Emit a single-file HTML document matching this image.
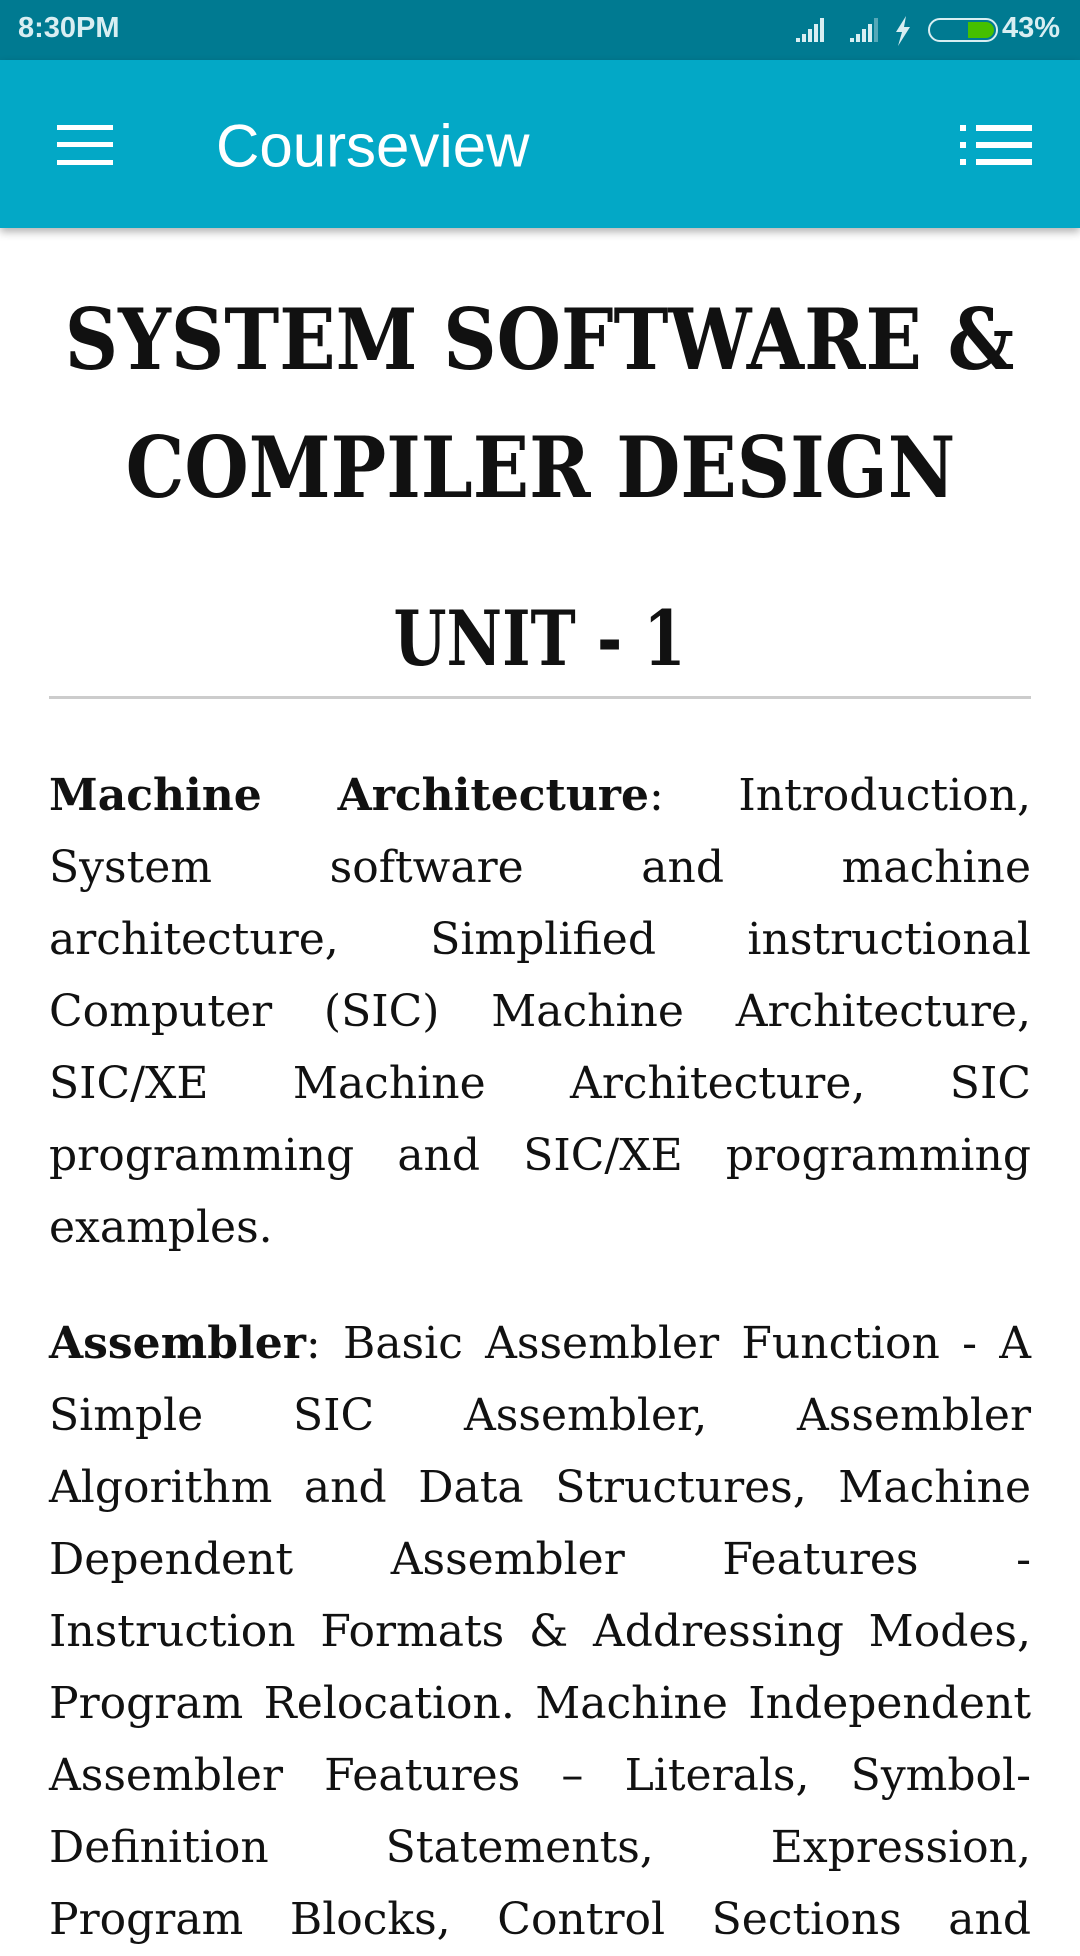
<!DOCTYPE html>
<html><head><meta charset="utf-8"><style>
*{margin:0;padding:0;box-sizing:border-box}
body{width:1080px;height:1920px;overflow:hidden;background:#fff;font-family:"DejaVu Serif","Liberation Serif",serif;color:#111;position:relative}
.sb{height:60px;background:#007a91;position:relative;color:#d8eef2;font-family:"Liberation Sans",sans-serif;font-weight:bold}
.sb .t{position:absolute;left:18px;top:12px;font-size:29px}
.sb .p{position:absolute;right:20px;top:12px;font-size:29px}
.hd{height:168px;background:#03a8c6;position:relative;box-shadow:0 4px 8px rgba(0,0,0,.3)}
.hd .ti{position:absolute;left:216px;top:86px;transform:translateY(-50%);color:#fff;font-family:"Liberation Sans",sans-serif;font-size:60px}
.h{position:absolute;left:0;width:1080px;text-align:center;font-weight:bold;white-space:nowrap}
.h span{display:inline-block}
.l{position:absolute;left:49px;width:982px;white-space:nowrap;font-size:44px;line-height:72px;text-align:justify;text-align-last:justify}
.l.e{text-align-last:left}
hr{position:absolute;top:696px;left:49px;width:982px;border:0;border-top:3px solid #ccc}
</style></head><body>
<div class="sb"><span class="t">8:30PM</span>
<svg style="position:absolute;left:792px;top:16px" width="270" height="30">
<g fill="#d8eef2"><rect x="4" y="22" width="4" height="4"/><rect x="10" y="18" width="4" height="8"/><rect x="16" y="13" width="4" height="13"/><rect x="22" y="8" width="4" height="18"/><rect x="28" y="2" width="4" height="24"/>
<rect x="58" y="22" width="4" height="4"/><rect x="64" y="18" width="4" height="8"/><rect x="70" y="13" width="4" height="13"/><rect x="76" y="8" width="4" height="18"/><rect x="82" y="2" width="4" height="24" opacity=".4"/>
<path d="M114 0 L104 16 L110 16 L106 30 L118 11 L112 11 Z"/></g>
<rect x="137" y="3" width="68" height="22" rx="11" fill="none" stroke="#d8eef2" stroke-width="2"/>
<path d="M176 6 H194 a8 8 0 0 1 0 16 H176 Z" fill="#45c000"/>
</svg><span class="p">43%</span></div>
<div class="hd">
<svg style="position:absolute;left:57px;top:65px" width="56" height="40"><g fill="#fff"><rect y="0" width="56" height="5"/><rect y="17" width="56" height="5"/><rect y="35" width="56" height="5"/></g></svg>
<span class="ti">Courseview</span>
<svg style="position:absolute;left:960px;top:65px" width="72" height="40"><g fill="#fff"><rect y="0" width="6" height="6"/><rect y="17" width="6" height="6"/><rect y="34" width="6" height="6"/><rect x="16" y="0" width="56" height="6"/><rect x="16" y="17" width="56" height="6"/><rect x="16" y="34" width="56" height="6"/></g></svg>
</div>
<div class="h" style="top:276px;font-size:84px;line-height:128px"><span style="transform:scaleX(.88)">SYSTEM SOFTWARE &amp;</span></div>
<div class="h" style="top:404px;font-size:84px;line-height:128px"><span style="transform:scaleX(.88)">COMPILER DESIGN</span></div>
<div class="h" style="top:594px;font-size:76px;line-height:90px"><span style="transform:scaleX(.8)">UNIT - 1</span></div>
<hr>
<div class="l" style="top:760px"><b>Machine Architecture</b>: Introduction,</div>
<div class="l" style="top:832px">System software and machine</div>
<div class="l" style="top:904px">architecture, Simplified instructional</div>
<div class="l" style="top:976px">Computer (SIC) Machine Architecture,</div>
<div class="l" style="top:1048px">SIC/XE Machine Architecture, SIC</div>
<div class="l" style="top:1120px">programming and SIC/XE programming</div>
<div class="l e" style="top:1192px">examples.</div>
<div class="l" style="top:1308px"><b>Assembler</b>: Basic Assembler Function - A</div>
<div class="l" style="top:1380px">Simple SIC Assembler, Assembler</div>
<div class="l" style="top:1452px">Algorithm and Data Structures, Machine</div>
<div class="l" style="top:1524px">Dependent Assembler Features -</div>
<div class="l" style="top:1596px">Instruction Formats &amp; Addressing Modes,</div>
<div class="l" style="top:1668px">Program Relocation. Machine Independent</div>
<div class="l" style="top:1740px">Assembler Features – Literals, Symbol-</div>
<div class="l" style="top:1812px">Definition Statements, Expression,</div>
<div class="l" style="top:1884px">Program Blocks, Control Sections and</div>
</body></html>
